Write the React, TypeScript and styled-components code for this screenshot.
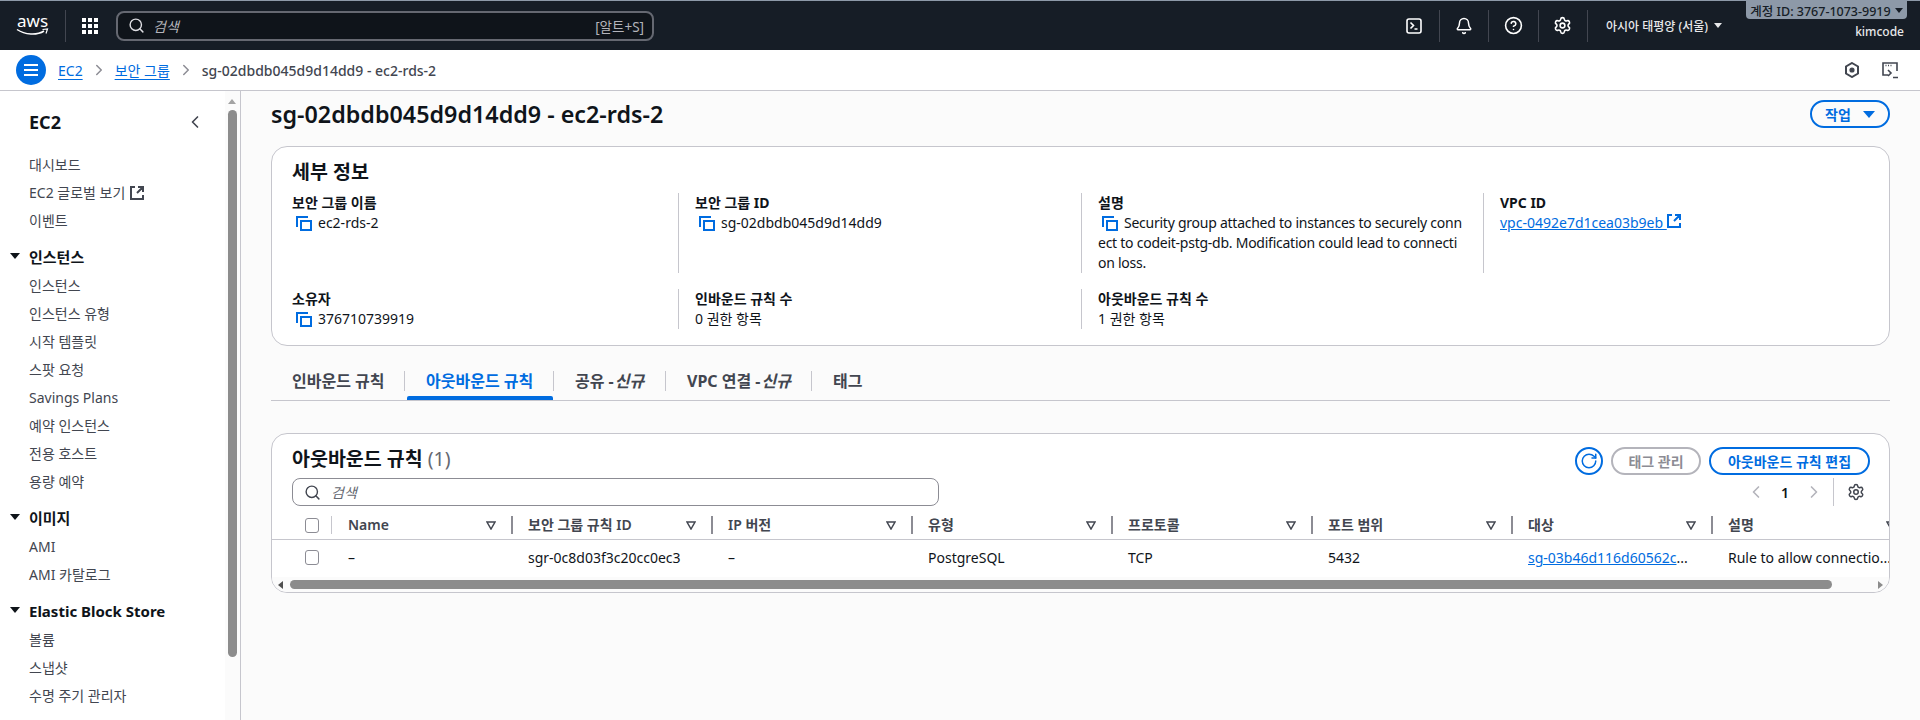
import React from 'react';
import styled, {createGlobalStyle} from 'styled-components';
import {Search, ChevronLeft, ChevronRight, RotateCw, Settings, Bell, CircleHelp} from 'lucide-react';

const FONT = `"Noto Sans", "Noto Sans CJK KR", sans-serif`;
const BLUE = '#006ce0';

const GlobalStyle = createGlobalStyle`
	html, body {
		margin: 0;
		padding: 0;
		background: #fbfbfb;
	}
	* {
		box-sizing: border-box;
	}
	#root {
		font-family: ${FONT};
		font-size: 14px;
		color: #0f141a;
	}
`;

const Page = styled.div`
	width: 1920px;
	height: 720px;
	overflow: hidden;
	display: flex;
	flex-direction: column;
`;

//top nav
const TopNav = styled.header`
	height: 50px;
	flex: none;
	background: #161d26;
	border-top: 1px solid #8d99a8;
	display: flex;
	align-items: center;
	padding-left: 17px;
`;
const LogoBox = styled.div`
	width: 49px;
	margin-right: 16px;
	height: 32px;
	border-right: 1px solid #424650;
	flex: none;
`;
const LogoSvg = styled.svg`
	display: block;
	margin-top: 5px;
	overflow: visible;
`;
const GridBox = styled.div`
	width: 16px;
	height: 16px;
	margin-right: 18px;
	display: grid;
	grid-template-columns: repeat(3, 4px);
	grid-auto-rows: 4px;
	gap: 2px;
	flex: none;
	i {
		background: #fff;
		display: block;
	}
`;
const GlobalSearch = styled.div`
	width: 538px;
	height: 30px;
	background: #0f141a;
	border: 2px solid #656871;
	border-radius: 8px;
	display: flex;
	align-items: center;
	padding: 0 8px 0 10px;
	color: #b4b4bb;
	em {
		margin-left: 8px;
		flex: 1;
	}
	span {
		font-size: 13.5px;
	}
`;
const NavIcons = styled.div`
	margin-left: auto;
	display: flex;
	align-items: center;
	height: 32px;
	color: #fff;
`;
const NavIcon = styled.div`
	width: 49.5px;
	height: 32px;
	display: flex;
	align-items: center;
	justify-content: center;
	border-right: 1px solid #424650;
`;
const Region = styled.div`
	color: #e8e8ea;
	font-size: 12px;
	font-weight: 500;
	margin-left: 18px;
	width: 141px;
	display: flex;
	align-items: center;
	gap: 6px;
`;
const Caret = styled.span<{$color?: string; $size?: number}>`
	display: inline-block;
	width: 0;
	height: 0;
	border-left: ${p => p.$size || 5}px solid transparent;
	border-right: ${p => p.$size || 5}px solid transparent;
	border-top: ${p => (p.$size || 5) * 1.3}px solid ${p => p.$color || '#e8e8ea'};
`;
const AccountBox = styled.div`
	width: 173px;
	padding-right: 16px;
	display: flex;
	flex-direction: column;
	align-items: flex-end;
	align-self: flex-start;
`;
const AccountChip = styled.div`
	height: 18px;
	width: 161px;
	margin-right: -3px;
	background: #8d99a8;
	border-radius: 0 0 4px 4px;
	color: #161d26;
	font-size: 12.5px;
	font-weight: 500;
	display: flex;
	align-items: center;
	justify-content: center;
	gap: 4px;
	white-space: nowrap;
`;
const UserName = styled.div`
	color: #e8e8ea;
	font-size: 12px;
	font-weight: 500;
	margin-top: 4px;
	line-height: 18px;
`;

//breadcrumb bar
const CrumbBar = styled.div`
	height: 41px;
	flex: none;
	background: #fff;
	border-bottom: 1px solid #c6c6cd;
	display: flex;
	align-items: center;
	padding: 0 21px 0 16px;
`;
const MenuButton = styled.div`
	width: 30px;
	height: 30px;
	border-radius: 50%;
	background: ${BLUE};
	margin-right: 12px;
	display: flex;
	flex-direction: column;
	align-items: center;
	justify-content: center;
	gap: 3px;
	i {
		width: 14px;
		height: 2px;
		background: #fff;
		display: block;
	}
`;
const Crumb = styled.a`
	color: ${BLUE};
	text-decoration: underline;
	text-underline-offset: 3px;
	font-size: 14px;
`;
const CrumbSep = styled.span`
	display: flex;
	color: #8c8c94;
	margin: 0 7px;
`;
const CrumbCurrent = styled.span`
	color: #424650;
	font-size: 14px;
	font-weight: 500;
`;
const CrumbTools = styled.div`
	margin-left: auto;
	display: flex;
	align-items: center;
	gap: 22px;
	color: #424650;
`;

//body
const Body = styled.div`
	flex: 1;
	display: flex;
	min-height: 0;
`;
const Sidebar = styled.nav`
	width: 241px;
	flex: none;
	background: #fff;
	border-right: 1px solid #c6c6cd;
	padding: 17px 0 0 29px;
	position: relative;
	overflow: hidden;
`;
const SideScrollTrack = styled.div`
	position: absolute;
	top: 0;
	right: 0;
	bottom: 0;
	width: 15px;
	background: #fbfbfb;
`;
const SideScrollUp = styled.span`
	position: absolute;
	top: 8px;
	left: 3px;
	border-left: 4px solid transparent;
	border-right: 4px solid transparent;
	border-bottom: 5px solid #a3a3a3;
`;
const SideScrollThumb = styled.div`
	position: absolute;
	top: 19px;
	left: 3px;
	width: 9px;
	height: 547px;
	border-radius: 5px;
	background: #8c8c8c;
`;
const SideHead = styled.div`
	font-size: 18px;
	font-weight: 700;
	line-height: 28px;
	margin-bottom: 15px;
	display: flex;
	align-items: center;
	justify-content: space-between;
	width: 176px;
	color: #0f141a;
`;
const SideItem = styled.div`
	font-size: 14px;
	line-height: 28px;
	height: 28px;
	color: #424650;
	display: flex;
	align-items: center;
	gap: 5px;
`;
const SideSection = styled.div`
	font-size: 15px;
	font-weight: 700;
	line-height: 26px;
	height: 28px;
	margin-top: 9px;
	color: #0f141a;
	position: relative;
`;
const SectionCaret = styled(Caret)`
	position: absolute;
	left: -19px;
	top: 9px;
`;

//main
const Main = styled.main`
	flex: 1;
	padding: 8px 30px 0 30px;
	min-width: 0;
`;
const TitleRow = styled.div`
	display: flex;
	align-items: center;
	justify-content: space-between;
	height: 30px;
	margin-bottom: 17px;
`;
const PageTitle = styled.h1`
	margin: 0;
	font-size: 23.3px;
	font-weight: 600;
	color: #0f141a;
`;
const Pill = styled.button<{$disabled?: boolean; $width: number}>`
	width: ${p => p.$width}px;
	height: 28px;
	border-radius: 14px;
	background: #fff;
	border: 2px solid ${p => (p.$disabled ? '#b4b4bb' : BLUE)};
	color: ${p => (p.$disabled ? '#8c8c94' : BLUE)};
	font-family: ${FONT};
	font-size: 14px;
	font-weight: 700;
	display: inline-flex;
	align-items: center;
	justify-content: center;
	padding: 0;
`;
const ActionPill = styled(Pill)`
	gap: 12px;
	background: transparent;
`;
const Panel = styled.section`
	background: #fff;
	border: 1px solid #c6c6cd;
	border-radius: 16px;
`;
const DetailPanel = styled(Panel)`
	height: 200px;
	padding: 11px 0 0 3px;
`;
const PanelTitle = styled.h2`
	margin: 0 0 7px 17px;
	font-size: 19.5px;
	line-height: 28px;
	font-weight: 700;
`;
const DetailGrid = styled.div`
	display: grid;
	grid-template-columns: 403px 403px 402px 403px;
	row-gap: 16px;
`;
const Cell = styled.div<{$first?: boolean; $tall?: boolean}>`
	padding: 0 15px 0 ${p => (p.$first ? 17 : 16)}px;
	border-left: ${p => (p.$first ? 'none' : '1px solid #c6c6cd')};
	height: ${p => (p.$tall ? 80 : 40)}px;
	line-height: 20px;
	font-size: 14px;
	b {
		display: block;
		font-size: 14px;
		font-weight: 700;
	}
`;
const DescText = styled.span`
	letter-spacing: -0.25px;
	white-space: nowrap;
`;
const CopyMark = styled.span`
	display: inline-block;
	vertical-align: -3px;
	margin: 0 6px 0 4px;
	line-height: 0;
`;
const BlueLink = styled.a`
	color: ${BLUE};
	text-decoration: underline;
`;

//tabs
const TabRow = styled.div`
	margin-top: 25px;
	height: 30px;
	border-bottom: 1px solid #c6c6cd;
	display: flex;
	align-items: flex-start;
`;
const Tab = styled.div<{$active?: boolean; $width: number}>`
	width: ${p => p.$width}px;
	height: 20px;
	line-height: 20px;
	padding-left: 21px;
	font-size: 16px;
	font-weight: 700;
	color: ${p => (p.$active ? BLUE : '#424650')};
	border-right: 1px solid #c6c6cd;
	white-space: nowrap;
	position: relative;
	&:last-child {
		border-right: none;
	}
	em {
		font-style: italic;
		margin-left: 1px;
	}
	${p => p.$active && `
		&::after {
			content: '';
			position: absolute;
			left: 2px;
			right: 0;
			top: 25px;
			height: 4px;
			border-radius: 2px 2px 0 0;
			background: ${BLUE};
		}
	`}
`;

//table panel
const TablePanel = styled(Panel)`
	margin-top: 32px;
	height: 160px;
	overflow: hidden;
	position: relative;
`;
const TableHead = styled.div`
	padding: 12px 19px 0 20px;
	display: flex;
	align-items: center;
	justify-content: space-between;
	height: 41px;
`;
const TableTitle = styled.div`
	font-size: 19.5px;
	font-weight: 700;
	line-height: 28px;
	margin-top: -3px;
	span {
		font-weight: 400;
		color: #656871;
	}
`;
const HeadActions = styled.div`
	display: flex;
	align-items: center;
	gap: 8px;
`;
const RoundIcon = styled.div`
	width: 28px;
	height: 28px;
	border-radius: 50%;
	border: 2px solid ${BLUE};
	color: ${BLUE};
	display: flex;
	align-items: center;
	justify-content: center;
`;
const ToolRow = styled.div`
	height: 28px;
	margin-top: 3px;
	padding: 0 20px 0 20px;
	display: flex;
	align-items: center;
	justify-content: space-between;
`;
const TableSearch = styled.div`
	width: 647px;
	height: 28px;
	border: 1px solid #8c8c94;
	border-radius: 8px;
	background: #fff;
	display: flex;
	align-items: center;
	padding-left: 11px;
	gap: 10px;
	color: #424650;
	em {
		color: #656871;
		font-size: 14px;
	}
`;
const Pager = styled.div`
	display: flex;
	align-items: center;
	height: 28px;
	color: #b4b4bb;
	b {
		color: #0f141a;
		font-size: 14px;
		font-weight: 600;
		width: 24px;
		text-align: center;
		margin: 0 7px;
	}
`;
const PagerGear = styled.div`
	margin-left: 9px;
	border-left: 1px solid #c6c6cd;
	height: 28px;
	width: 36px;
	display: flex;
	align-items: center;
	justify-content: flex-end;
	padding-right: 4px;
	color: #424650;
`;
const HeadRow = styled.div`
	display: flex;
	align-items: flex-start;
	width: 1800px;
	height: 33px;
	padding-top: 10px;
	font-weight: 600;
	font-size: 14px;
	color: #424650;
`;
const BodyRow = styled.div`
	display: flex;
	align-items: center;
	height: 35px;
	font-size: 14px;
	color: #0f141a;
`;
const RowLine = styled.div`
	height: 1px;
	background: #c6c6cd;
	width: 100%;
`;
const CheckCell = styled.div`
	width: 59px;
	flex: none;
	padding-left: 33px;
	height: 18px;
	display: flex;
	align-items: center;
`;
const CheckMark = styled.span`
	width: 14px;
	height: 15px;
	border: 1px solid #8c8c94;
	border-radius: 3px;
	background: #fff;
	display: block;
`;
const HeadCell = styled.div<{$first?: boolean}>`
	width: ${p => (p.$first ? 180 : 200)}px;
	flex: none;
	height: 18px;
	line-height: 18px;
	padding: 0 15px 0 ${p => (p.$first ? 16 : 15)}px;
	border-left: ${p => (p.$first ? '1px solid #c6c6cd' : '2px solid #8c8c94')};
	display: flex;
	align-items: center;
	justify-content: space-between;
	white-space: nowrap;
`;
const FilterMark = styled.span`
	display: block;
	line-height: 0;
`;
const DataCell = styled.div<{$width?: number}>`
	width: ${p => p.$width || 200}px;
	flex: none;
	padding-left: 17px;
	white-space: nowrap;
`;
const HScroll = styled.div`
	position: absolute;
	left: 0;
	right: 0;
	bottom: 0;
	height: 15px;
	background: #fbfbfb;
`;
const HThumb = styled.div`
	position: absolute;
	left: 18px;
	top: 3px;
	width: 1542px;
	height: 9px;
	border-radius: 5px;
	background: #8c8c8c;
`;
const HArrow = styled.span<{$right?: boolean}>`
	position: absolute;
	top: 4px;
	${p => (p.$right ? 'right: 6px;' : 'left: 6px;')}
	border-top: 4px solid transparent;
	border-bottom: 4px solid transparent;
	${p => (p.$right ? 'border-left: 5px solid #8c8c8c;' : 'border-right: 5px solid #505050;')}
`;

function AwsLogo() {
	return (
		<LogoSvg width="32" height="24" viewBox="0 0 32 24">
			<text x="0" y="12" fill="#fff" fontFamily={FONT} fontSize="17">aws</text>
			<path d="M0 14.5c8 5.5 20 6 27 1.5" stroke="#fff" strokeWidth="1.5" fill="none"/>
			<path d="M25.5 14.5l5-.5-1.5 4.5" stroke="#fff" strokeWidth="1.2" fill="none"/>
		</LogoSvg>
	);
}

function TerminalIcon() {
	return (
		<svg width="16" height="16" viewBox="0 0 16 16" fill="none" stroke="#fff" strokeWidth="1.6">
			<rect x="1" y="1" width="14" height="14" rx="2"/>
			<path d="M4.5 4.5l3 3-3 3M8.5 11h3"/>
		</svg>
	);
}

function CopyIcon() {
	return (
		<svg width="16" height="15" viewBox="0 0 16 15" fill="none" stroke={BLUE} strokeWidth="2">
			<rect x="5" y="5" width="10" height="9"/>
			<path d="M1 11V1h11"/>
		</svg>
	);
}

function ExternalIcon({color}: {color: string}) {
	return (
		<svg width="14" height="14" viewBox="0 0 14 14" fill="none" stroke={color} strokeWidth="2">
			<path d="M5 1H1v12h12V9M7 7l6-6M8 1h5v5"/>
		</svg>
	);
}

function HexIcon() {
	return (
		<svg width="16" height="16" viewBox="0 0 16 16" fill="none" stroke="#424650" strokeWidth="2">
			<path d="M8 1l6 3.5v7L8 15l-6-3.5v-7z"/>
			<circle cx="8" cy="8" r="1.6" fill="#424650"/>
		</svg>
	);
}

function ConsoleIcon() {
	return (
		<svg width="17" height="17" viewBox="0 0 17 17" fill="none" stroke="#424650" strokeWidth="1.6">
			<path d="M6 13H1V1h14v8"/>
			<path d="M3.5 3.5h1M6 3.5h1M8.5 3.5h1" strokeWidth="1.4"/>
			<path d="M6 8l3 3-3 3M11 15.5h5"/>
		</svg>
	);
}

function FilterIcon() {
	return (
		<svg width="10" height="9" viewBox="0 0 10 9" fill="none" stroke="#424650" strokeWidth="1.5">
			<path d="M1 1h8L5 8z"/>
		</svg>
	);
}

const navGroups = [
	{items: ['인스턴스', '인스턴스 유형', '시작 템플릿', '스팟 요청', 'Savings Plans', '예약 인스턴스', '전용 호스트', '용량 예약'], title: '인스턴스'},
	{items: ['AMI', 'AMI 카탈로그'], title: '이미지'},
	{items: ['볼륨', '스냅샷', '수명 주기 관리자'], title: 'Elastic Block Store'},
];

const columns = ['Name', '보안 그룹 규칙 ID', 'IP 버전', '유형', '프로토콜', '포트 범위', '대상', '설명'];

function App() {
	return (
		<Page>
			<GlobalStyle/>
			<TopNav>
				<LogoBox><AwsLogo/></LogoBox>
				<GridBox>{Array.from({length: 9}, (_, i) => <i key={i}/>)}</GridBox>
				<GlobalSearch>
					<Search size={17} color="#dedee3" strokeWidth={2}/>
					<em>검색</em>
					<span>[알트+S]</span>
				</GlobalSearch>
				<NavIcons>
					<NavIcon><TerminalIcon/></NavIcon>
					<NavIcon><Bell size={18} strokeWidth={2}/></NavIcon>
					<NavIcon><CircleHelp size={19} strokeWidth={2}/></NavIcon>
					<NavIcon><Settings size={19} strokeWidth={2}/></NavIcon>
				</NavIcons>
				<Region>아시아 태평양 (서울) <Caret $size={4}/></Region>
				<AccountBox>
					<AccountChip>계정 ID: 3767-1073-9919 <Caret $color="#161d26" $size={4}/></AccountChip>
					<UserName>kimcode</UserName>
				</AccountBox>
			</TopNav>
			<CrumbBar>
				<MenuButton><i/><i/><i/></MenuButton>
				<Crumb>EC2</Crumb>
				<CrumbSep><ChevronRight size={18}/></CrumbSep>
				<Crumb>보안 그룹</Crumb>
				<CrumbSep><ChevronRight size={18}/></CrumbSep>
				<CrumbCurrent>sg-02dbdb045d9d14dd9 - ec2-rds-2</CrumbCurrent>
				<CrumbTools>
					<HexIcon/>
					<ConsoleIcon/>
				</CrumbTools>
			</CrumbBar>
			<Body>
				<Sidebar>
					<SideHead>EC2 <ChevronLeft size={20} color="#424650" strokeWidth={2}/></SideHead>
					<SideItem>대시보드</SideItem>
					<SideItem>EC2 글로벌 보기 <ExternalIcon color="#424650"/></SideItem>
					<SideItem>이벤트</SideItem>
					{navGroups.map(group => (
						<div key={group.title}>
							<SideSection><SectionCaret $color="#0f141a"/>{group.title}</SideSection>
							{group.items.map(item => <SideItem key={item}>{item}</SideItem>)}
						</div>
					))}
					<SideScrollTrack>
						<SideScrollUp/>
						<SideScrollThumb/>
					</SideScrollTrack>
				</Sidebar>
				<Main>
					<TitleRow>
						<PageTitle>sg-02dbdb045d9d14dd9 - ec2-rds-2</PageTitle>
						<ActionPill $width={80}>작업 <Caret $color={BLUE} $size={6}/></ActionPill>
					</TitleRow>
					<DetailPanel>
						<PanelTitle>세부 정보</PanelTitle>
						<DetailGrid>
							<Cell $first $tall><b>보안 그룹 이름</b><CopyMark><CopyIcon/></CopyMark>ec2-rds-2</Cell>
							<Cell $tall><b>보안 그룹 ID</b><CopyMark><CopyIcon/></CopyMark>sg-02dbdb045d9d14dd9</Cell>
							<Cell $tall>
								<b>설명</b>
								<CopyMark><CopyIcon/></CopyMark>
								<DescText>Security group attached to instances to securely conn<br/>ect to codeit-pstg-db. Modification could lead to connecti<br/>on loss.</DescText>
							</Cell>
							<Cell $tall><b>VPC ID</b><BlueLink>vpc-0492e7d1cea03b9eb </BlueLink><ExternalIcon color={BLUE}/></Cell>
							<Cell $first><b>소유자</b><CopyMark><CopyIcon/></CopyMark>376710739919</Cell>
							<Cell><b>인바운드 규칙 수</b>0 권한 항목</Cell>
							<Cell><b>아웃바운드 규칙 수</b>1 권한 항목</Cell>
						</DetailGrid>
					</DetailPanel>
					<TabRow>
						<Tab $width={134}>인바운드 규칙</Tab>
						<Tab $width={149} $active>아웃바운드 규칙</Tab>
						<Tab $width={112}>공유 -<em>신규</em></Tab>
						<Tab $width={146}>VPC 연결 -<em>신규</em></Tab>
						<Tab $width={80}>태그</Tab>
					</TabRow>
					<TablePanel>
						<TableHead>
							<TableTitle>아웃바운드 규칙 <span>(1)</span></TableTitle>
							<HeadActions>
								<RoundIcon><RotateCw size={18} strokeWidth={2}/></RoundIcon>
								<Pill $disabled $width={90}>태그 관리</Pill>
								<Pill $width={161}>아웃바운드 규칙 편집</Pill>
							</HeadActions>
						</TableHead>
						<ToolRow>
							<TableSearch><Search size={17} strokeWidth={2}/><em>검색</em></TableSearch>
							<Pager>
								<ChevronLeft size={20}/>
								<b>1</b>
								<ChevronRight size={20}/>
								<PagerGear><Settings size={18} strokeWidth={2}/></PagerGear>
							</Pager>
						</ToolRow>
						<HeadRow>
							<CheckCell><CheckMark/></CheckCell>
							{columns.map((name, i) => (
								<HeadCell key={name} $first={i === 0}>{name}<FilterMark><FilterIcon/></FilterMark></HeadCell>
							))}
						</HeadRow>
						<RowLine/>
						<BodyRow>
							<CheckCell><CheckMark/></CheckCell>
							<DataCell $width={180}>–</DataCell>
							<DataCell>sgr-0c8d03f3c20cc0ec3</DataCell>
							<DataCell>–</DataCell>
							<DataCell>PostgreSQL</DataCell>
							<DataCell>TCP</DataCell>
							<DataCell>5432</DataCell>
							<DataCell><BlueLink>sg-03b46d116d60562c</BlueLink>...</DataCell>
							<DataCell $width={177}>Rule to allow connectio...</DataCell>
						</BodyRow>
						<HScroll>
							<HArrow/>
							<HThumb/>
							<HArrow $right/>
						</HScroll>
					</TablePanel>
				</Main>
			</Body>
		</Page>
	);
}

export default App;
